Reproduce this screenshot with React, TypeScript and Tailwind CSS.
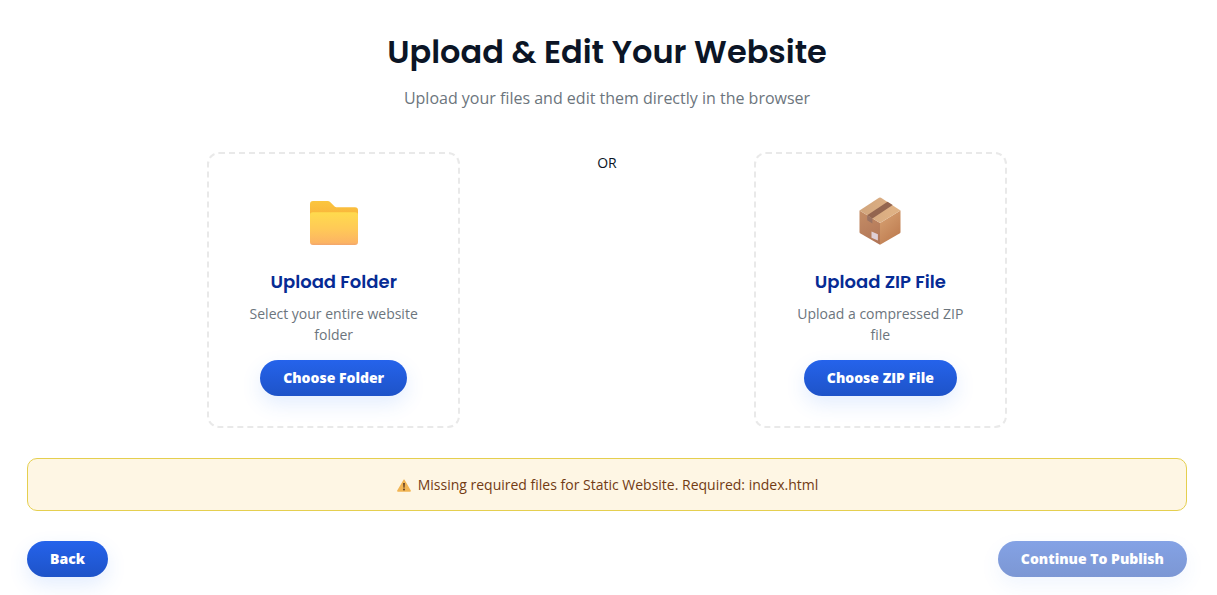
import type { ReactNode } from "react";

const buttonClass =
  "h-9 rounded-full bg-linear-to-b from-[#2563eb] to-[#1e53c8] px-[23px] text-sm font-extrabold text-white shadow-[0_8px_20px_rgba(59,130,246,0.14)] disabled:from-[#84a2e5] disabled:to-[#7c97d4] disabled:shadow-[0_8px_20px_rgba(59,130,246,0.08)]";

/** Yellow folder, drawn in a 48 unit box. */
function FolderIcon() {
  return (
    <svg aria-hidden viewBox="0 -2 48 48" className="size-12" fill="none">
      <defs>
        <linearGradient id="folder-back" x1="0" y1="2" x2="0" y2="16" gradientUnits="userSpaceOnUse">
          <stop stopColor="#fbc63f" />
          <stop offset="1" stopColor="#f9b53b" />
        </linearGradient>
        <linearGradient id="folder-front" x1="0" y1="13" x2="0" y2="46" gradientUnits="userSpaceOnUse">
          <stop stopColor="#ffdb4d" />
          <stop offset="0.5" stopColor="#ffca57" />
          <stop offset="0.92" stopColor="#fcb563" />
          <stop offset="1" stopColor="#f3a66c" />
        </linearGradient>
      </defs>
      <path
        d="M0 5a3 3 0 0 1 3-3h14.500c1.200 0 2.100.4 2.900 1.200l4 4c.8.8 1.500 1.100 2.600 1.100H45a3 3 0 0 1 3 3V24H0Z"
        fill="url(#folder-back)"
      />
      <path
        d="M0 16a2.800 2.800 0 0 1 2.800-2.800h42.400A2.800 2.800 0 0 1 48 16v27a3 3 0 0 1-3 3H3a3 3 0 0 1-3-3Z"
        fill="url(#folder-front)"
      />
    </svg>
  );
}

/** Taped cardboard box, seen from above one corner. */
function PackageIcon() {
  return (
    <svg aria-hidden viewBox="0 0 48 48" className="size-12" fill="none">
      <defs>
        <linearGradient id="box-left" x1="4" y1="14" x2="24" y2="46" gradientUnits="userSpaceOnUse">
          <stop stopColor="#c48d66" />
          <stop offset="1" stopColor="#b07456" />
        </linearGradient>
        <linearGradient id="box-right" x1="25" y1="24" x2="42" y2="42" gradientUnits="userSpaceOnUse">
          <stop stopColor="#d29a6c" />
          <stop offset="1" stopColor="#be7c50" />
        </linearGradient>
        <linearGradient id="box-top" x1="10" y1="12" x2="36" y2="16" gradientUnits="userSpaceOnUse">
          <stop stopColor="#d3a77e" />
          <stop offset="1" stopColor="#dfb184" />
        </linearGradient>
      </defs>
      <path d="M3.500 13.500 24 26v21.700L4.500 36.600a2 2 0 0 1-1-1.700Z" fill="url(#box-left)" />
      <path d="M24 26 44.500 13.500v21.400a2 2 0 0 1-1 1.700L24 47.700Z" fill="url(#box-right)" />
      <path d="M3.500 13.500 23 .8a2 2 0 0 1 2 0l19.500 12.700L24 26Z" fill="url(#box-top)" />
      <path d="m11.200 18.200 20.300-13.400 5.200 3.300L16.400 21.400Z" fill="#93654f" />
      <path d="m11.200 18.200 5.200 3.200v5l-5.200-3.200Z" fill="#9a7262" />
      <path d="m15.500 34.600 6.400 2.600v6.200l-6.400-2.600Z" fill="#dfcfd6" />
    </svg>
  );
}

function WarningIcon() {
  return (
    <svg aria-hidden viewBox="0 0 16 16" className="size-4 shrink-0" fill="none">
      <path d="M7.400 2.900c.3-.6 1-.6 1.300 0l6.100 10.600c.3.600 0 1.200-.7 1.200H1.900c-.7 0-1-.6-.7-1.200Z" fill="#f2b553" />
      <path d="M7.200 6.100h1.600l-.3 4.700h-1Z" fill="#54341f" />
      <circle cx="8" cy="12.500" r="0.900" fill="#54341f" />
    </svg>
  );
}

type UploadCardProps = {
  icon: ReactNode;
  title: string;
  text: string;
  action: string;
};

function UploadCard({ icon, title, text, action }: UploadCardProps) {
  return (
    <section className="flex flex-col items-center rounded-xl border-2 border-dashed border-[#e9e9e9] p-[30px] text-center">
      <div className="flex h-[74px] items-center">{icon}</div>
      <h2 className="mt-[10px] font-['Poppins','Inter',sans-serif] text-lg font-semibold text-[#062b94]">
        {title}
      </h2>
      <p className="mt-[7px] text-sm leading-[21px] text-[#6c757d]">{text}</p>
      <button type="button" className={`mt-[15px] ${buttonClass}`}>
        {action}
      </button>
    </section>
  );
}

export default function App() {
  return (
    <main className="min-h-screen bg-white pt-7 pr-[30px] pb-4 pl-[27px] font-['Open_Sans',sans-serif] text-[#0b1526]">
      <header className="text-center">
        <h1 className="font-['Poppins','Inter',sans-serif] text-[32px] leading-[48px] font-semibold">
          Upload &amp; Edit Your Website
        </h1>
        <p className="mt-[10px] text-base text-[#6c757d]">
          Upload your files and edit them directly in the browser
        </p>
      </header>

      <div className="mx-auto mt-[42px] grid max-w-[800px] grid-cols-3 gap-5">
        <UploadCard
          icon={<FolderIcon />}
          title="Upload Folder"
          text="Select your entire website folder"
          action="Choose Folder"
        />
        <div className="text-center text-sm leading-[21px]">OR</div>
        <UploadCard
          icon={<PackageIcon />}
          title="Upload ZIP File"
          text="Upload a compressed ZIP file"
          action="Choose ZIP File"
        />
      </div>

      <div
        role="alert"
        className="mt-[30px] flex items-center justify-center gap-[6px] rounded-[10px] border border-[#e5cf4f] bg-[#fef6e4] p-[15px] text-sm leading-[21px] text-[#723b13]"
      >
        <WarningIcon />
        Missing required files for Static Website. Required: index.html
      </div>

      <div className="mt-[30px] flex justify-between">
        <button type="button" className={buttonClass}>
          Back
        </button>
        <button type="button" disabled className={buttonClass}>
          Continue To Publish
        </button>
      </div>
    </main>
  );
}
